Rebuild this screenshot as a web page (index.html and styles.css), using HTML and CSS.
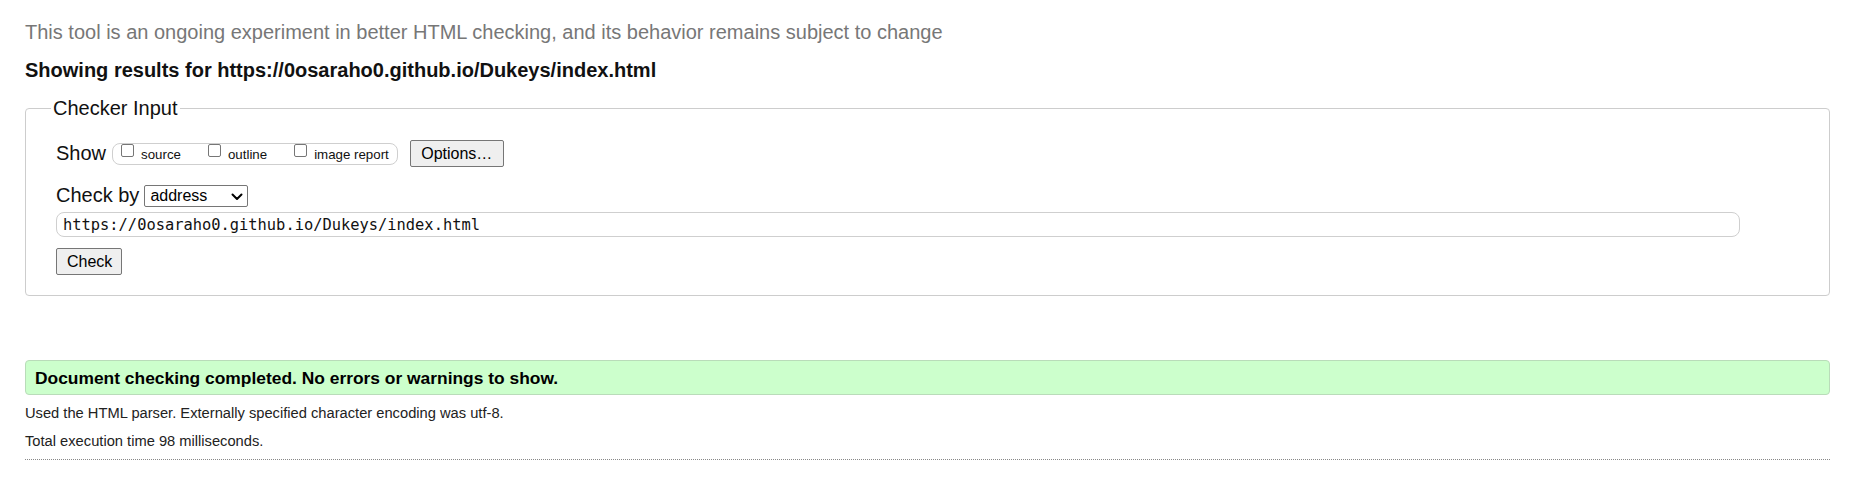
FILE: index.html
```html
<!DOCTYPE html>
<html lang="en">
<head>
<meta charset="utf-8">
<title>Showing results for https://0osaraho0.github.io/Dukeys/index.html - Nu Html Checker</title>
<link rel="stylesheet" href="styles.css">
</head>
<body>
<p class="intro">This tool is an ongoing experiment in better HTML checking, and its behavior remains subject to change</p>
<h2 class="results-title">Showing results for https://0osaraho0.github.io/Dukeys/index.html</h2>
<form class="checker">
  <fieldset class="checker-input">
    <legend class="checker-legend">Checker Input</legend>
    <div class="rows">
      <div class="row row-show">
        <span class="row-label">Show</span>
        <span class="show-options">
          <label class="opt"><input class="cb" type="checkbox"><span class="opt-text">source</span></label>
          <label class="opt"><input class="cb" type="checkbox"><span class="opt-text">outline</span></label>
          <label class="opt opt-last"><input class="cb" type="checkbox"><span class="opt-text">image report</span></label>
        </span>
        <button type="button" class="btn btn-options">Options…</button>
      </div>
      <div class="row row-by">
        <label class="row-label" for="docselect">Check by</label>
        <span class="select-wrap">
          <select id="docselect" class="by-select">
            <option>address</option>
            <option>file upload</option>
            <option>text input</option>
          </select>
          <svg class="select-caret" width="12" height="8" viewBox="0 0 12 8" aria-hidden="true"><polyline points="1.5,1.5 6,6 10.5,1.5" fill="none" stroke="#000" stroke-width="2" stroke-linecap="round" stroke-linejoin="round"/></svg>
        </span>
      </div>
      <div class="row row-url">
        <input class="url" type="url" value="https://0osaraho0.github.io/Dukeys/index.html" aria-label="URL">
      </div>
      <div class="row row-submit">
        <button type="button" class="btn btn-check">Check</button>
      </div>
    </div>
  </fieldset>
</form>
<p class="success">Document checking completed. No errors or warnings to show.</p>
<p class="details">Used the HTML parser. Externally specified character encoding was utf-8.</p>
<p class="details details-last">Total execution time 98 milliseconds.</p>
<hr class="rule">
</body>
</html>
```
FILE: styles.css
```css
html {
  background: #fff;
}

body {
  margin: 0;
  padding: 0 26px 0 25px;
  font-family: "Liberation Sans", Arial, sans-serif;
  color: #111;
}

.intro {
  margin: 21px 0 15px;
  font-size: 20px;
  line-height: 23px;
  color: #777;
}

.results-title {
  margin: 0 0 15px;
  font-size: 20px;
  line-height: 23px;
  font-weight: bold;
  color: #111;
}

.checker {
  margin: 0;
}

.checker-input {
  margin: 0;
  padding: 0 30px 20px 25px;
  border: 1px solid #cdcdcd;
  border-radius: 4px;
  min-width: 0;
}

.checker-legend {
  padding: 0 2px;
  font-size: 20px;
  line-height: 23px;
  color: #111;
}

.rows {
  display: flex;
  flex-direction: column;
  padding-left: 5px;
}

.row {
  display: flex;
  align-items: center;
}

.row-show {
  margin-top: 20px;
  height: 27px;
}

.row-by {
  margin-top: 17px;
  height: 23px;
}

.row-url {
  margin-top: 5px;
}

.row-submit {
  margin-top: 11px;
}

.row-label {
  font-size: 20px;
  line-height: 23px;
  color: #111;
}

.row-show .row-label {
  margin-right: 6px;
}

.row-by .row-label {
  margin-right: 5px;
}

.show-options {
  display: inline-flex;
  align-items: flex-start;
  box-sizing: border-box;
  height: 22px;
  padding: 0 8px 0 8px;
  border: 1px solid #cfcfcf;
  border-radius: 8px;
  margin-right: 12px;
}

.opt {
  display: inline-flex;
  align-items: flex-start;
  margin-right: 27px;
}

.opt-last {
  margin-right: 0;
}

.cb {
  appearance: none;
  -webkit-appearance: none;
  box-sizing: border-box;
  width: 13px;
  height: 13px;
  margin: 0 7px 0 0;
  border: 1px solid #767676;
  border-radius: 2px;
  background: #fff;
}

.opt-text {
  font-size: 13.3px;
  line-height: 21px;
  color: #111;
}

.btn {
  box-sizing: border-box;
  height: 27px;
  padding: 0 10px;
  font-family: "Liberation Sans", Arial, sans-serif;
  font-size: 16px;
  color: #000;
  background: #efefef;
  border: 1px solid #767676;
  border-radius: 2px;
}

.btn-options {
  width: 94px;
}

.btn-check {
  width: 66px;
}

.select-wrap {
  position: relative;
  display: inline-flex;
}

.by-select {
  appearance: none;
  -webkit-appearance: none;
  box-sizing: border-box;
  width: 104px;
  height: 22px;
  margin: 0;
  padding: 0 0 0 5px;
  font-family: "Liberation Sans", Arial, sans-serif;
  font-size: 16px;
  color: #000;
  background: #fff;
  border: 1px solid #767676;
  border-radius: 2px;
}

.select-caret {
  position: absolute;
  left: 87px;
  top: 8px;
  pointer-events: none;
}

.url {
  box-sizing: border-box;
  width: calc(100% - 59px);
  height: 25px;
  margin: 0;
  padding: 0 6px;
  font-family: "DejaVu Sans Mono", "Liberation Mono", monospace;
  font-size: 15.4px;
  color: #111;
  background: #fff;
  border: 1px solid #cfcfcf;
  border-radius: 8px;
}

.success {
  margin: 64px 0 10px;
  padding: 7px 9px 6px;
  font-size: 17.4px;
  line-height: 20px;
  font-weight: bold;
  color: #000;
  background: #ccffcc;
  border: 1px solid #b9dcb9;
  border-radius: 4px;
}

.details {
  margin: 0 0 11px;
  font-size: 14.7px;
  line-height: 17px;
  color: #222;
}

.details-last {
  margin-bottom: 9px;
}

.rule {
  margin: 0;
  height: 0;
  border: 0;
  border-top: 1px dotted #888;
}
```
